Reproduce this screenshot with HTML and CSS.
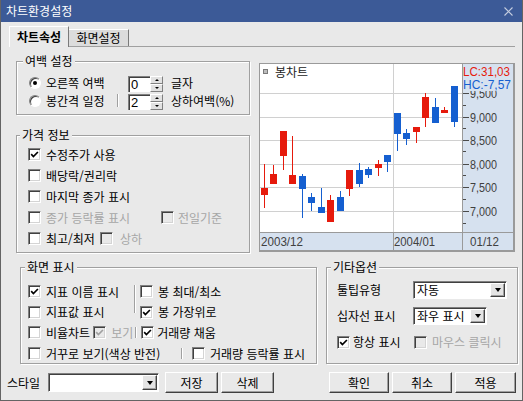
FILE: index.html
```html
<!DOCTYPE html>
<html lang="ko">
<head>
<meta charset="utf-8">
<title>차트환경설정</title>
<link rel="stylesheet" href="styles.css">
</head>
<body>
<div class="window">
  <div class="titlebar">
    <span class="title">차트환경설정</span>
    <svg class="close" width="9" height="9" viewBox="0 0 9 9"><path d="M0.5 0.5L8.5 8.5M8.5 0.5L0.5 8.5" stroke="#c6cee0" stroke-width="1.1" fill="none"/></svg>
  </div>

  <div class="tabs">
    <div class="tab active">차트속성</div>
    <div class="tab">화면설정</div>
  </div>

  <div class="panel">
    <div class="leftcol">
      <fieldset class="group g-margin">
        <legend>여백 설정</legend>
        <div class="gbody">
          <div class="mrow">
            <span class="radio checked"></span>
            <span class="mlabel">오른쪽 여백</span>
            <span class="spin"><span class="spin-val">0</span><span class="spin-btns"><span class="sb up"></span><span class="sb down"></span></span></span>
            <span class="after">글자</span>
          </div>
          <div class="mrow">
            <span class="radio"></span>
            <span class="mlabel">봉간격 일정<span class="vsep"></span></span>
            <span class="spin"><span class="spin-val">2</span><span class="spin-btns"><span class="sb up"></span><span class="sb down"></span></span></span>
            <span class="after">상하여백(%)</span>
          </div>
        </div>
      </fieldset>

      <fieldset class="group g-price">
        <legend>가격 정보</legend>
        <div class="gbody">
          <div class="crow"><span class="cb"><svg width="9" height="9" viewBox="0 0 9 9"><path d="M1.2 4.2L3.4 6.5L7.9 2" fill="none" stroke="#000" stroke-width="1.7"/></svg></span><span class="lbl">수정주가 사용</span></div>
          <div class="crow"><span class="cb"></span><span class="lbl">배당락/권리락</span></div>
          <div class="crow"><span class="cb"></span><span class="lbl">마지막 종가 표시</span></div>
          <div class="crow"><span class="cb"></span><span class="lbl dis-t w115">종가 등락률 표시</span><span class="cb dis"></span><span class="lbl dis-t ml4">전일기준</span></div>
          <div class="crow"><span class="cb"></span><span class="lbl">최고/최저</span><span class="cb dis ml5"></span><span class="lbl dis-t ml7">상하</span></div>
        </div>
      </fieldset>
    </div>

    <div class="chart">
      <svg width="256" height="189" viewBox="259 63 256 189">
        <defs>
          <clipPath id="clip95"><rect x="463" y="91" width="50" height="12"/></clipPath>
        </defs>
        <rect x="259" y="63" width="256" height="189" fill="#fff"/>
        <rect x="462" y="63" width="52" height="188" fill="#d6e1ef"/>
        <rect x="259" y="232" width="255" height="19" fill="#d6e1ef"/>
        <g stroke="#d0d0d0" stroke-width="1">
          <line x1="260" x2="462" y1="93.5" y2="93.5"/>
          <line x1="260" x2="462" y1="117.5" y2="117.5"/>
          <line x1="260" x2="462" y1="140.5" y2="140.5"/>
          <line x1="260" x2="462" y1="164.5" y2="164.5"/>
          <line x1="260" x2="462" y1="187.5" y2="187.5"/>
          <line x1="260" x2="462" y1="211.5" y2="211.5"/>
          <line x1="393.5" x2="393.5" y1="64" y2="232"/>
        </g>
        <g fill="#e61a0c">
          <rect x="264" y="164" width="1" height="44"/><rect x="261" y="188" width="7" height="7"/>
          <rect x="273" y="165" width="1" height="19"/><rect x="270" y="174" width="7" height="10"/>
          <rect x="283" y="131" width="1" height="39"/><rect x="280" y="131" width="7" height="25"/>
          <rect x="292" y="136" width="1" height="48"/><rect x="289" y="175" width="7" height="9"/>
          <rect x="330" y="195" width="1" height="27"/><rect x="327" y="200" width="7" height="22"/>
          <rect x="349" y="170" width="1" height="26"/><rect x="346" y="170" width="7" height="19"/>
          <rect x="378" y="160" width="1" height="16"/><rect x="375" y="164" width="7" height="4"/>
          <rect x="416" y="127" width="1" height="16"/><rect x="413" y="127" width="7" height="5"/>
          <rect x="425" y="93" width="1" height="34"/><rect x="422" y="97" width="7" height="21"/>
          <rect x="444" y="107" width="1" height="6"/><rect x="441" y="110" width="7" height="3"/>
        </g>
        <g fill="#155fd0">
          <rect x="302" y="174" width="1" height="44"/><rect x="299" y="176" width="7" height="13"/>
          <rect x="311" y="193" width="1" height="18"/><rect x="308" y="197" width="7" height="6"/>
          <rect x="321" y="188" width="1" height="25"/><rect x="318" y="207" width="7" height="6"/>
          <rect x="340" y="191" width="1" height="20"/><rect x="337" y="197" width="7" height="14"/>
          <rect x="359" y="163" width="1" height="24"/><rect x="356" y="170" width="7" height="14"/>
          <rect x="368" y="167" width="1" height="11"/><rect x="365" y="169" width="7" height="6"/>
          <rect x="387" y="155" width="1" height="17"/><rect x="384" y="155" width="7" height="7"/>
          <rect x="397" y="113" width="1" height="38"/><rect x="394" y="113" width="7" height="21"/>
          <rect x="406" y="129" width="1" height="16"/><rect x="403" y="133" width="7" height="6"/>
          <rect x="435" y="98" width="1" height="25"/><rect x="432" y="107" width="7" height="16"/>
          <rect x="454" y="86" width="1" height="41"/><rect x="451" y="86" width="7" height="36"/>
        </g>
        <g stroke="#9a9a9a" stroke-width="1">
          <line x1="462.5" x2="462.5" y1="63" y2="251"/>
          <line x1="259" x2="513" y1="232.5" y2="232.5"/>
          <line x1="393.5" x2="393.5" y1="233" y2="251"/>
        </g>
        <g stroke="#4a4a4a" stroke-width="1">
          <line x1="463" x2="469" y1="93.5" y2="93.5"/>
          <line x1="463" x2="469" y1="117.5" y2="117.5"/>
          <line x1="463" x2="469" y1="140.5" y2="140.5"/>
          <line x1="463" x2="469" y1="164.5" y2="164.5"/>
          <line x1="463" x2="469" y1="187.5" y2="187.5"/>
          <line x1="463" x2="469" y1="211.5" y2="211.5"/>
          <line x1="463" x2="466" y1="105.5" y2="105.5"/>
          <line x1="463" x2="466" y1="128.5" y2="128.5"/>
          <line x1="463" x2="466" y1="151.5" y2="151.5"/>
          <line x1="463" x2="466" y1="175.5" y2="175.5"/>
          <line x1="463" x2="466" y1="199.5" y2="199.5"/>
          <line x1="463" x2="466" y1="223.5" y2="223.5"/>
        </g>
        <g class="axis-t" fill="#404040">
          <text x="470" y="98" textLength="27" lengthAdjust="spacingAndGlyphs" clip-path="url(#clip95)">9,500</text>
          <text x="470" y="122" textLength="27" lengthAdjust="spacingAndGlyphs">9,000</text>
          <text x="470" y="145" textLength="27" lengthAdjust="spacingAndGlyphs">8,500</text>
          <text x="470" y="169" textLength="27" lengthAdjust="spacingAndGlyphs">8,000</text>
          <text x="470" y="192" textLength="27" lengthAdjust="spacingAndGlyphs">7,500</text>
          <text x="470" y="216" textLength="27" lengthAdjust="spacingAndGlyphs">7,000</text>
          <text x="261" y="246" textLength="42" lengthAdjust="spacingAndGlyphs">2003/12</text>
          <text x="394" y="246" textLength="41" lengthAdjust="spacingAndGlyphs">2004/01</text>
          <text x="470" y="246" textLength="29" lengthAdjust="spacingAndGlyphs">01/12</text>
        </g>
        <g class="axis-t">
          <text x="463" y="76" fill="#e61a0c" textLength="47" lengthAdjust="spacingAndGlyphs">LC:31,03</text>
          <text x="463" y="89" fill="#155fd0" textLength="48" lengthAdjust="spacingAndGlyphs">HC:-7,57</text>
        </g>
        <rect x="263.5" y="69.5" width="4" height="4" fill="#bdbdbd" stroke="#7a7a7a"/>
        <text class="legend-t" x="275" y="76.5" fill="#222">봉차트</text>
        <rect x="259.5" y="63.5" width="254" height="187" fill="none" stroke="#9a9a9a"/>
        <rect x="513" y="63" width="2" height="189" fill="#9a9a9a"/>
        <rect x="259" y="250" width="256" height="2" fill="#9a9a9a"/>
      </svg>
    </div>
  </div>

  <div class="lower">
    <fieldset class="group g-view">
      <legend>화면 표시</legend>
      <div class="gbody">
        <div class="vgrid">
          <span class="gsep"></span>
          <div class="citem c1"><span class="cb"><svg width="9" height="9" viewBox="0 0 9 9"><path d="M1.2 4.2L3.4 6.5L7.9 2" fill="none" stroke="#000" stroke-width="1.7"/></svg></span><span class="lbl">지표 이름 표시</span></div>
          <div class="citem c3"><span class="cb"></span><span class="lbl">봉 최대/최소</span></div>
          <div class="citem c1"><span class="cb"></span><span class="lbl">지표값 표시</span></div>
          <div class="citem c3"><span class="cb"><svg width="9" height="9" viewBox="0 0 9 9"><path d="M1.2 4.2L3.4 6.5L7.9 2" fill="none" stroke="#000" stroke-width="1.7"/></svg></span><span class="lbl">봉 가장위로</span></div>
        </div>
        <div class="crow">
          <span class="cb"></span><span class="lbl">비율차트</span>
          <span class="cb dis ml3"><svg width="9" height="9" viewBox="0 0 9 9"><path d="M1.2 4.2L3.4 6.5L7.9 2" fill="none" stroke="#a0a0a0" stroke-width="1.7"/></svg></span><span class="lbl dis-t">보기</span>
          <span class="isep ml2"></span>
          <span class="cb ml4"><svg width="9" height="9" viewBox="0 0 9 9"><path d="M1.2 4.2L3.4 6.5L7.9 2" fill="none" stroke="#000" stroke-width="1.7"/></svg></span><span class="lbl ml3">거래량 채움</span>
        </div>
        <div class="crow">
          <span class="cb"></span><span class="lbl w135">거꾸로 보기(색상 반전)</span>
          <span class="isep"></span>
          <span class="cb ml9"></span><span class="lbl">거래량 등락률 표시</span>
        </div>
      </div>
    </fieldset>

    <fieldset class="group g-etc">
      <legend>기타옵션</legend>
      <div class="gbody">
        <div class="erow">
          <span class="elabel">툴팁유형</span>
          <span class="combo w94"><span class="combo-text">자동</span><span class="combo-btn"></span></span>
        </div>
        <div class="erow">
          <span class="elabel">십자선 표시</span>
          <span class="combo w74"><span class="combo-text">좌우 표시</span><span class="combo-btn"></span></span>
        </div>
        <div class="erow">
          <span class="cb"><svg width="9" height="9" viewBox="0 0 9 9"><path d="M1.2 4.2L3.4 6.5L7.9 2" fill="none" stroke="#000" stroke-width="1.7"/></svg></span><span class="lbl ml3 w57">항상 표시</span>
          <span class="cb dis ml4"></span><span class="lbl dis-t">마우스 클릭시</span>
        </div>
      </div>
    </fieldset>
  </div>

  <div class="footer">
    <span class="flabel">스타일</span>
    <span class="combo w111"><span class="combo-text"></span><span class="combo-btn"></span></span>
    <span class="btn b53 ml6">저장</span>
    <span class="btn b53 ml3">삭제</span>
    <span class="btn b60 push">확인</span>
    <span class="btn b60 ml3">취소</span>
    <span class="btn b61 ml3">적용</span>
  </div>
</div>
</body>
</html>
```

FILE: styles.css
```css
* { box-sizing: border-box; }
html, body { margin: 0; padding: 0; }
body {
  font-family: "Noto Sans CJK KR", "Noto Sans", sans-serif;
  font-size: 12px;
  line-height: 16px;
  color: #000;
  background: #e9e9e9;
}

.window {
  width: 523px;
  height: 401px;
  border: 1px solid #646464;
  border-top: 0;
  background: #e9e9e9;
  overflow: hidden;
}

.titlebar {
  height: 22px;
  margin: 0 -1px;
  background: #3c5a97;
  color: #fff;
  display: flex;
  align-items: center;
  justify-content: space-between;
  padding: 0 10px 0 6px;
}
.title { line-height: 14px; }
.close { display: block; }

/* tabs */
.tabs {
  display: flex;
  align-items: flex-end;
  height: 20px;
  margin-top: 4px;
  padding-left: 8px;
}
.tab {
  width: 60px;
  height: 17px;
  background: #dcdcdc;
  border-top: 1px solid #fff;
  border-right: 1px solid #7a7a7a;
  display: flex;
  align-items: center;
  justify-content: center;
  line-height: 14px;
}
.tab.active {
  height: 21px;
  margin-bottom: -1px;
  background: #e9e9e9;
  border-left: 1px solid #fff;
  font-weight: bold;
  position: relative;
  z-index: 1;
}

.panel {
  margin: 0 7px 0 8px;
  border-top: 1px solid #a0a0a0;
  display: flex;
  align-items: flex-start;
  padding-top: 6px;
}
.leftcol { margin-left: 7px; width: 234px; }
.chart { margin-left: 9px; margin-top: 10px; width: 256px; height: 189px; }
.chart svg { display: block; }
.axis-t { font-family: "Liberation Sans", Arial, sans-serif; font-size: 13px; }
.legend-t { font-family: "Noto Sans CJK KR", sans-serif; font-size: 12px; }

/* group boxes */
.group {
  margin: 0;
  padding: 0;
  min-width: 0;
  border: 1px solid #a0a0a0;
  box-shadow: 1px 1px 0 #fff, inset 1px 1px 0 #fff;
}
.group > legend {
  padding: 0 2px;
  height: 16px;
  line-height: 16px;
  background: #e9e9e9;
}
.g-margin > legend { margin-left: 6px; }
.g-margin .gbody { padding: 7px 0 4px 12px; }

.mrow { display: flex; align-items: flex-start; height: 16px; }
.mrow + .mrow { margin-top: 2px; }
.mlabel {
  width: 82px;
  margin-left: 5px;
  display: flex;
  align-items: center;
  line-height: 13px;
  white-space: nowrap;
}
.vsep {
  margin-left: auto;
  margin-right: 9px;
  width: 2px;
  height: 13px;
  border-left: 1px solid #a0a0a0;
  border-right: 1px solid #fff;
}
.after { margin-left: 8px; line-height: 13px; white-space: nowrap; }

.radio {
  width: 12px;
  height: 12px;
  margin-top: 1px;
  flex: none;
  border-radius: 50%;
  background: #fff;
  border: 1px solid;
  border-color: #808080 #fff #fff #808080;
  box-shadow: inset 1px 1px 0 #404040;
  display: flex;
  align-items: center;
  justify-content: center;
}
.radio.checked::after {
  content: "";
  width: 4px;
  height: 4px;
  border-radius: 50%;
  background: #000;
}

.spin { display: flex; height: 16px; }
.spin-val {
  width: 22px;
  height: 16px;
  background: #fff;
  border-top: 1px solid #808080;
  border-left: 1px solid #808080;
  box-shadow: inset 1px 1px 0 #404040;
  font-family: "Liberation Sans", Arial, sans-serif;
  font-size: 13px;
  line-height: 13px;
  padding: 1px 0 0 2px;
}
.spin-btns { display: flex; flex-direction: column; width: 13px; }
.sb {
  height: 8px;
  background: #e2e2e2;
  border: 1px solid;
  border-color: #fff #808080 #808080 #fff;
  display: flex;
  align-items: center;
  justify-content: center;
}
.sb::after {
  content: "";
  border-left: 2px solid transparent;
  border-right: 2px solid transparent;
}
.sb.up::after { border-bottom: 2px solid #000; }
.sb.down::after { border-top: 2px solid #000; }

.g-price { margin-top: 12px; }
.g-price > legend { margin-left: 3px; }
.g-price .gbody { padding: 1px 0 3px 11px; }

.crow { display: flex; align-items: center; height: 21px; }

.cb {
  width: 13px;
  height: 13px;
  flex: none;
  background: #fff;
  border: 1px solid;
  border-color: #808080 #fff #fff #808080;
  box-shadow: inset 1px 1px 0 #404040, inset -1px -1px 0 #d4d4d4;
  display: flex;
  align-items: center;
  justify-content: center;
}
.cb svg { display: block; }
.cb.dis { background: #e9e9e9; }
.lbl { margin-left: 5px; white-space: nowrap; }
.dis-t { color: #a6a6a6; }

.w115 { width: 115px; }
.w135 { width: 135px; }
.w57 { width: 57px; }
.ml2 { margin-left: 2px; }
.ml3 { margin-left: 3px; }
.ml4 { margin-left: 4px; }
.ml5 { margin-left: 5px; }
.ml6 { margin-left: 6px; }
.ml7 { margin-left: 7px; }
.ml9 { margin-left: 9px; }

/* lower groups */
.lower { display: flex; margin-top: 6px; padding-left: 19px; }
.g-view { width: 297px; height: 105px; }
.g-view > legend { margin-left: 4px; }
.g-view .gbody { padding: 6px 0 0 7px; }
.g-etc { width: 192px; height: 105px; margin-left: 9px; }
.g-etc > legend { margin-left: 4px; }
.g-etc .gbody { padding: 6px 0 0 10px; }

.vgrid {
  display: grid;
  grid-template-columns: 106px 6px auto;
  grid-template-rows: 21px 20px;
}
.gsep {
  grid-column: 2;
  grid-row: 1 / 3;
  width: 2px;
  height: 28px;
  margin-top: 4px;
  border-left: 1px solid #a0a0a0;
  border-right: 1px solid #fff;
}
.citem { display: flex; align-items: center; }
.c1 { grid-column: 1; }
.c3 { grid-column: 3; }
.isep {
  flex: none;
  width: 2px;
  height: 11px;
  border-left: 1px solid #a0a0a0;
  border-right: 1px solid #fff;
}

.erow { display: flex; align-items: center; height: 18px; }
.erow + .erow { margin-top: 8px; }
.elabel { width: 76px; white-space: nowrap; }

.combo {
  display: flex;
  height: 18px;
  background: #fff;
  border: 1px solid;
  border-color: #808080 #fff #fff #808080;
  box-shadow: inset 1px 1px 0 #404040;
  padding: 1px;
  flex: none;
}
.combo-text {
  flex: 1;
  min-width: 0;
  padding-left: 2px;
  display: flex;
  align-items: center;
  line-height: 16px;
  white-space: nowrap;
}
.combo-btn {
  width: 15px;
  flex: none;
  background: #e4e4e4;
  border: 1px solid;
  border-color: #fff #404040 #404040 #fff;
  box-shadow: inset -1px -1px 0 #a0a0a0;
  display: flex;
  align-items: center;
  justify-content: center;
}
.combo-btn::after {
  content: "";
  border-left: 3.5px solid transparent;
  border-right: 3.5px solid transparent;
  border-top: 4px solid #000;
}
.w94 { width: 94px; }
.w74 { width: 74px; }
.w111 { width: 111px; height: 19px; }

/* footer */
.footer {
  display: flex;
  align-items: center;
  height: 21px;
  margin-top: 8px;
  padding: 0 6px;
}
.flabel { width: 41px; white-space: nowrap; }
.btn {
  height: 21px;
  flex: none;
  background: #e9e9e9;
  border: 1px solid;
  border-color: #fff #404040 #404040 #fff;
  box-shadow: inset -1px -1px 0 #a0a0a0;
  display: flex;
  align-items: center;
  justify-content: center;
  line-height: 14px;
}
.b53 { width: 53px; }
.b60 { width: 60px; }
.b61 { width: 61px; }
.push { margin-left: auto; }
```
